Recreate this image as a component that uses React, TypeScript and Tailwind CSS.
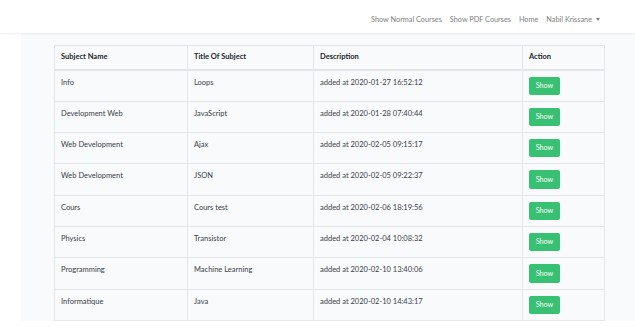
const rows = [
  ["Info", "Loops", "added at 2020-01-27 16:52:12"],
  ["Development Web", "JavaScript", "added at 2020-01-28 07:40:44"],
  ["Web Development", "Ajax", "added at 2020-02-05 09:15:17"],
  ["Web Development", "JSON", "added at 2020-02-05 09:22:37"],
  ["Cours", "Cours test", "added at 2020-02-06 18:19:56"],
  ["Physics", "Transistor", "added at 2020-02-04 10:08:32"],
  ["Programming", "Machine Learning", "added at 2020-02-10 13:40:06"],
  ["Informatique", "Java", "added at 2020-02-10 14:43:17"],
];

function Navbar() {
  return (
    <nav className="relative z-10 h-[33px] bg-white shadow-[0_1px_2px_rgba(0,0,0,0.075)]">
      <ul className="flex h-full items-center justify-end gap-[8px] pr-[35px] pt-[6px] text-[7.3px] text-[#808080]">
        <li>Show Normal Courses</li>
        <li>Show PDF Courses</li>
        <li>Home</li>
        <li className="flex items-center gap-[4px]">
          Nabil Krissane
          <span className="block h-0 w-0 border-x-[2.5px] border-t-[3px] border-x-transparent border-t-[#808080]" />
        </li>
      </ul>
    </nav>
  );
}

export default function App() {
  return (
    <div className="min-h-screen bg-white font-['Lato','Noto_Sans',sans-serif] leading-[1.6] text-[#212529]">
      <Navbar />
      <main className="ml-[21px] bg-[#f8fafc] pt-[12px] pl-[33px]">
        <table className="w-[550px] table-fixed border-collapse text-[7.5px]">
          <colgroup>
            <col className="w-[133px]" />
            <col className="w-[126px]" />
            <col className="w-[209px]" />
            <col className="w-[82px]" />
          </colgroup>
          <thead>
            <tr>
              {["Subject Name", "Title Of Subject", "Description", "Action"].map((h) => (
                <th
                  key={h}
                  className="h-[24px] border border-b-[2px] border-[#e3e6ea] px-[6px] py-0 text-left align-middle font-bold"
                >
                  {h}
                </th>
              ))}
            </tr>
          </thead>
          <tbody>
            {rows.map((r, i) => (
              <tr key={i}>
                {r.map((c, j) => (
                  <td key={j} className="border border-[#e3e6ea] px-[6px] pt-[6px] pb-0 align-top text-[#3a4046]">
                    {c}
                  </td>
                ))}
                <td className="border border-[#e3e6ea] px-[6px] pt-[6px] pb-[6px] align-top">
                  <button className="block h-[18.3px] w-[31px] rounded-[2px] bg-[#38c172] text-[7.2px] text-white">
                    Show
                  </button>
                </td>
              </tr>
            ))}
          </tbody>
        </table>
      </main>
    </div>
  );
}
